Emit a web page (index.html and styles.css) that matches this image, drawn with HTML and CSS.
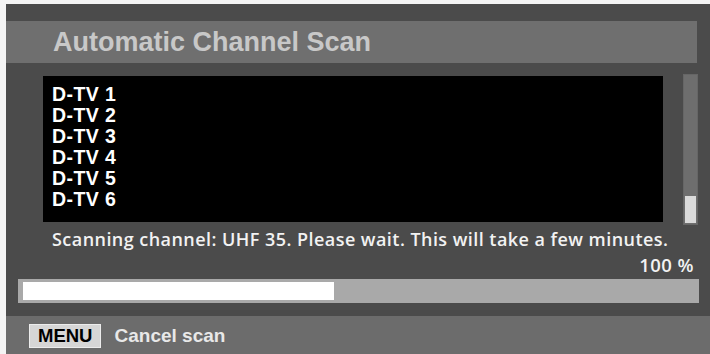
FILE: index.html
```html
<!DOCTYPE html>
<html>
<head>
<meta charset="utf-8">
<link rel="stylesheet" href="styles.css">
</head>
<body>
<div class="screen">
  <div class="title">Automatic Channel Scan</div>
  <div class="list-row">
    <div class="list">
      <div class="item">D-TV 1</div>
      <div class="item">D-TV 2</div>
      <div class="item">D-TV 3</div>
      <div class="item">D-TV 4</div>
      <div class="item">D-TV 5</div>
      <div class="item">D-TV 6</div>
    </div>
    <div class="scrollbar"><div class="thumb"></div></div>
  </div>
  <div class="status">
    <div class="msg">Scanning channel: UHF 35. Please wait. This will take a few minutes.</div>
    <div class="pct">100 %</div>
  </div>
  <div class="progress"><div class="fill" style="width:311px"></div></div>
  <div class="footer">
    <span class="key">MENU</span>
    <span class="action">Cancel scan</span>
  </div>
</div>
</body>
</html>
```
FILE: styles.css
```css
html, body {
  margin: 0;
  padding: 0;
  background: #f4f4f4;
}
.screen {
  margin: 4px 0 0 6px;
  width: 704px;
  height: 350px;
  background: #4b4b4b;
  display: flex;
  flex-direction: column;
  overflow: hidden;
}
.title {
  margin-top: 17px;
  width: 691px;
  height: 42px;
  box-sizing: border-box;
  padding-left: 47px;
  background: #6f6f6f;
  color: #c8c8c8;
  font-family: "Liberation Sans", Arial, sans-serif;
  font-weight: bold;
  font-size: 27px;
  line-height: 42px;
}
.list-row {
  margin-top: 11px;
  display: flex;
  align-items: flex-start;
  padding-left: 37px;
  gap: 20px;
  height: 151px;
}
.list {
  margin-top: 2px;
  width: 620px;
  height: 146px;
  box-sizing: border-box;
  padding: 8px 0 0 9px;
  background: #000;
}
.item {
  color: #fff;
  font-family: "Liberation Sans", Arial, sans-serif;
  font-weight: bold;
  font-size: 19.5px;
  letter-spacing: 0.4px;
  line-height: 21.1px;
}
.scrollbar {
  width: 15px;
  height: 151px;
  box-sizing: border-box;
  background: #6e6e6e;
  border: 1px solid #666;
  display: flex;
  flex-direction: column;
  justify-content: flex-end;
  padding: 0 1px 1px 1px;
}
.thumb {
  height: 27px;
  background: #dadada;
}
.status {
  height: 54px;
  box-sizing: border-box;
  padding: 2px 16px 0 46px;
  color: #f2f2f2;
  font-family: "Open Sans", sans-serif;
  font-weight: 600;
  font-size: 18px;
  letter-spacing: 0.45px;
  line-height: 25px;
  white-space: nowrap;
}
.pct {
  text-align: right;
  font-size: 18.5px;
}
.progress {
  margin: 0 0 0 12px;
  width: 681px;
  height: 24px;
  box-sizing: border-box;
  padding: 3px 5px;
  background: #a9a9a9;
}
.fill {
  height: 18px;
  background: #fff;
}
.footer {
  margin-top: 13px;
  flex: 1;
  background: #6c6c6c;
  display: flex;
  align-items: flex-start;
  padding: 8px 0 0 23px;
  gap: 13px;
  font-family: "Liberation Sans", Arial, sans-serif;
  font-weight: bold;
}
.key {
  height: 24px;
  box-sizing: border-box;
  padding: 0 8px;
  background: #d6d6d6;
  border: 1px solid #ececec;
  color: #000;
  font-size: 18.5px;
  line-height: 22px;
}
.action {
  color: #e8e8e8;
  font-size: 19px;
  line-height: 24px;
}
```
